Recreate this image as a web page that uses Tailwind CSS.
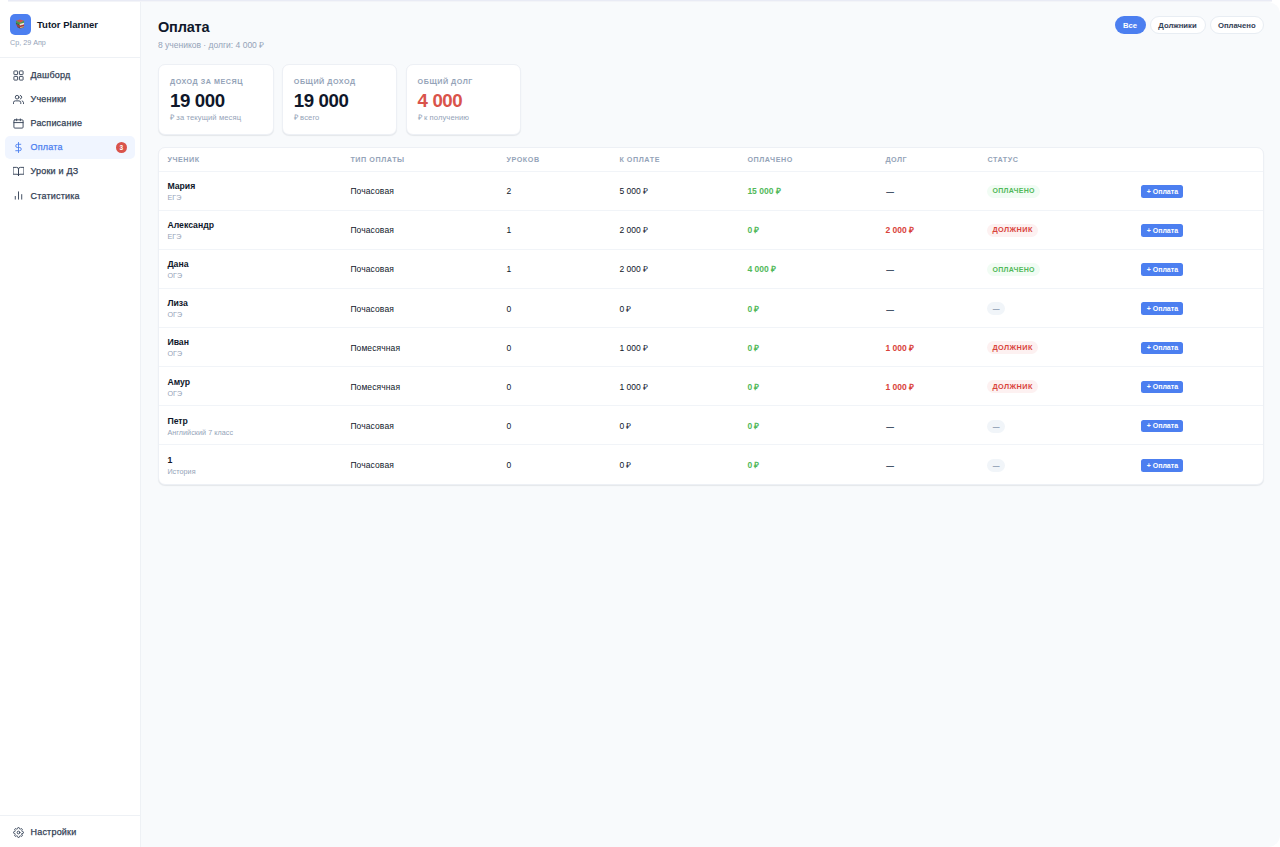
<!DOCTYPE html>
<html lang="ru">
<head>
    <meta charset="UTF-8">
    <meta name="viewport" content="width=device-width, initial-scale=1.0">
    <title>Tutor Planner</title>
    <script src="https://cdn.jsdelivr.net/npm/@tailwindcss/browser@4"></script>
</head>
<body class="h-screen overflow-hidden bg-white font-['Liberation_Sans',Arial,sans-serif] text-[#0f172a]">
    <div class="flex h-full flex-col">
        <div class="mx-2 h-[2px] shrink-0 border-b border-[#f3f4f8] bg-[#e9ebf5]"></div>
        <div class="flex min-h-0 flex-1">
            <!-- Sidebar -->
            <aside class="flex w-[141px] shrink-0 flex-col border-r border-[#eef1f5] bg-white">
                <div class="h-[56px] border-b border-[#eef1f5] px-[10px] pt-3">
                    <div class="flex items-center gap-[6.5px]">
                        <div class="flex size-[20.5px] items-center justify-center rounded-[5px] bg-[#4c7ff0]">
                            <svg class="size-[10px]" viewBox="0 0 22 22">
                                <path d="M2 4l9-3 9 3-8 5z" fill="#d2564a"/>
                                <path d="M2 4v4l9 4 9-3V4l-8 4z" fill="#4c9a4a"/>
                                <path d="M2 8l9 4v3l-9-4z" fill="#356b35"/>
                                <path d="M10 11l10-3v4l-9 3z" fill="#f1e4d0"/>
                                <path d="M3 11l8 4 9-3v3l-9 3-8-4z" fill="#b8342e"/>
                                <path d="M5 15l6 3 8-3v4l-8 2-6-3z" fill="#7a4434"/>
                                <path d="M11 18l8-2v2l-8 2z" fill="#e9c48f"/>
                            </svg>
                        </div>
                        <span class="pt-px text-[9.5px] leading-none font-bold">Tutor Planner</span>
                    </div>
                    <p class="mt-[4px] text-[7.2px] leading-[8px] text-[#94a3b8]">Ср, 29 Апр</p>
                </div>

                <nav class="flex flex-1 flex-col gap-[1.2px] px-[5px] pt-[5.5px] text-[9px] tracking-[0.2px] text-[#334155]">
                    <a class="flex h-[23px] items-center gap-[6.5px] px-[8px]">
                        <svg class="size-[11px]" viewBox="0 0 24 24" fill="none" stroke="currentColor" stroke-width="2" stroke-linejoin="round"><rect x="2" y="2" width="8" height="8" rx="1"/><rect x="14" y="2" width="8" height="8" rx="1"/><rect x="14" y="14" width="8" height="8" rx="1"/><rect x="2" y="14" width="8" height="8" rx="1"/></svg>
                        <span class="pt-px [-webkit-text-stroke:0.25px]">Дашборд</span>
                    </a>
                    <a class="flex h-[23px] items-center gap-[6.5px] px-[8px]">
                        <svg class="size-[11px]" viewBox="0 0 24 24" fill="none" stroke="currentColor" stroke-width="2" stroke-linecap="round" stroke-linejoin="round"><path d="M17 21v-2a4 4 0 0 0-4-4H5a4 4 0 0 0-4 4v2"/><circle cx="9" cy="7" r="4"/><path d="M23 21v-2a4 4 0 0 0-3-3.87"/><path d="M16 3.13a4 4 0 0 1 0 7.75"/></svg>
                        <span class="pt-px [-webkit-text-stroke:0.25px]">Ученики</span>
                    </a>
                    <a class="flex h-[23px] items-center gap-[6.5px] px-[8px]">
                        <svg class="size-[11px]" viewBox="0 0 24 24" fill="none" stroke="currentColor" stroke-width="2" stroke-linecap="round" stroke-linejoin="round"><rect x="2" y="4" width="20" height="18" rx="2"/><path d="M16 2v4M8 2v4M2 10h20"/></svg>
                        <span class="[-webkit-text-stroke:0.25px]">Расписание</span>
                    </a>
                    <a class="flex h-[23px] items-center gap-[6.5px] rounded-[5px] bg-[#f0f5ff] px-[8px] text-[#4c7ff0]">
                        <svg class="size-[11px]" viewBox="0 0 24 24" fill="none" stroke="currentColor" stroke-width="2" stroke-linecap="round" stroke-linejoin="round"><path d="M12 1v22"/><path d="M17 5H9.500a3.500 3.500 0 0 0 0 7h5a3.500 3.500 0 0 1 0 7H6"/></svg>
                        <span class="[-webkit-text-stroke:0.25px]">Оплата</span>
                        <span class="ml-auto flex size-[11.5px] items-center justify-center rounded-full bg-[#d9534b] text-[6.5px] font-bold tracking-normal text-white">3</span>
                    </a>
                    <a class="flex h-[23px] items-center gap-[6.5px] px-[8px]">
                        <svg class="size-[11px]" viewBox="0 0 24 24" fill="none" stroke="currentColor" stroke-width="2" stroke-linecap="round" stroke-linejoin="round"><path d="M1 3h7a4 4 0 0 1 4 4v14a3 3 0 0 0-3-3H1z"/><path d="M23 3h-7a4 4 0 0 0-4 4v14a3 3 0 0 1 3-3h8z"/></svg>
                        <span class="[-webkit-text-stroke:0.25px]">Уроки и ДЗ</span>
                    </a>
                    <a class="flex h-[23px] items-center gap-[6.5px] px-[8px]">
                        <svg class="size-[11px]" viewBox="0 0 24 24" fill="none" stroke="currentColor" stroke-width="2" stroke-linecap="round" stroke-linejoin="round"><path d="M19 20V10M12 20V4M5 20v-6"/></svg>
                        <span class="pt-px [-webkit-text-stroke:0.25px]">Статистика</span>
                    </a>
                </nav>

                <div class="h-[32px] border-t border-[#eef1f5] px-[5px] pt-[5px] text-[9px] tracking-[0.2px] text-[#334155]">
                    <a class="flex h-[23px] items-center gap-[6.5px] px-[8px]">
                        <svg class="size-[11px]" viewBox="0 0 24 24" fill="none" stroke="currentColor" stroke-width="2" stroke-linecap="round" stroke-linejoin="round"><circle cx="12" cy="12" r="3"/><path d="M19.400 15a1.650 1.650 0 0 0 .33 1.820l.06.06a2 2 0 1 1-2.830 2.830l-.06-.06a1.650 1.650 0 0 0-2.800 1.170V21a2 2 0 0 1-4 0v-.09a1.650 1.650 0 0 0-2.900-1.260l-.06.06a2 2 0 1 1-2.830-2.830l.06-.06A1.650 1.650 0 0 0 3.100 14H3a2 2 0 0 1 0-4h.09a1.650 1.650 0 0 0 1.260-2.900l-.06-.06a2 2 0 1 1 2.830-2.830l.06.06A1.650 1.650 0 0 0 10 3.090V3a2 2 0 0 1 4 0v.09a1.650 1.650 0 0 0 2.820 1.180l.06-.06a2 2 0 1 1 2.830 2.830l-.06.06A1.650 1.650 0 0 0 20.910 10H21a2 2 0 0 1 0 4h-.09a1.650 1.650 0 0 0-1.510 1z"/></svg>
                        <span class="[-webkit-text-stroke:0.25px]">Настройки</span>
                    </a>
                </div>
            </aside>

            <!-- Content -->
            <main class="min-w-0 flex-1 rounded-r-[12px] bg-[#f8fafc] pt-[14px] pr-4 pl-[17px]">
                <header class="flex h-[48px] items-start justify-between">
                    <div class="pt-[3px]">
                        <h1 class="text-[14.5px] leading-[17px] font-bold tracking-[-0.2px]">Оплата</h1>
                        <p class="mt-[4px] text-[8.5px] leading-[10px] text-[#94a3b8]">8 учеников · долги: 4 000 ₽</p>
                    </div>
                    <div class="flex gap-[4px] text-[7.7px] font-bold">
                        <button class="h-[18px] w-[31px] rounded-full bg-[#4c7ff0] pt-px text-white">Все</button>
                        <button class="h-[18px] w-[56px] rounded-full border border-[#e8edf3] bg-white pt-px text-[#334155]">Должники</button>
                        <button class="h-[18px] w-[54.5px] rounded-full border border-[#e8edf3] bg-white pt-px text-[#334155]">Оплачено</button>
                    </div>
                </header>

                <section class="flex gap-[8.3px]">
                    <div class="h-[71px] w-[115.5px] rounded-[7px] border border-[#edf0f5] bg-white pt-[12px] pl-[11px] shadow-[0_1px_1px_#0f172a14]">
                        <p class="text-[7.2px] leading-[9px] font-bold tracking-[0.52px] text-[#94a3b8]">ДОХОД ЗА МЕСЯЦ</p>
                        <p class="mt-[5px] text-[18.7px] leading-[20px] font-bold tracking-[-0.4px]">19 000</p>
                        <p class="mt-[2px] text-[7.6px] leading-[9px] tracking-[0.1px] text-[#94a3b8]">₽ за текущий месяц</p>
                    </div>
                    <div class="h-[71px] w-[115.5px] rounded-[7px] border border-[#edf0f5] bg-white pt-[12px] pl-[11px] shadow-[0_1px_1px_#0f172a14]">
                        <p class="text-[7.2px] leading-[9px] font-bold tracking-[0.52px] text-[#94a3b8]">ОБЩИЙ ДОХОД</p>
                        <p class="mt-[5px] text-[18.7px] leading-[20px] font-bold tracking-[-0.4px]">19 000</p>
                        <p class="mt-[2px] text-[7.6px] leading-[9px] tracking-[0.1px] text-[#94a3b8]">₽ всего</p>
                    </div>
                    <div class="h-[71px] w-[115.5px] rounded-[7px] border border-[#edf0f5] bg-white pt-[12px] pl-[11px] shadow-[0_1px_1px_#0f172a14]">
                        <p class="text-[7.2px] leading-[9px] font-bold tracking-[0.52px] text-[#94a3b8]">ОБЩИЙ ДОЛГ</p>
                        <p class="mt-[5px] text-[18.7px] leading-[20px] font-bold tracking-[-0.4px] text-[#d9534b]">4 000</p>
                        <p class="mt-[2px] text-[7.6px] leading-[9px] tracking-[0.1px] text-[#94a3b8]">₽ к получению</p>
                    </div>
                </section>

                <section class="mt-[12px] overflow-hidden rounded-[7px] border border-[#edf0f5] bg-white shadow-[0_1px_1px_#0f172a14]">
                    <table class="w-full table-fixed text-left text-[8.5px]">
                        <thead>
                            <tr class="h-[23px] text-[7.2px] tracking-[0.55px] text-[#94a3b8]">
                                <th class="w-[183px] pt-[2px] pl-[8.4px]">УЧЕНИК</th>
                                <th class="w-[156px] pt-[2px] pl-[8.4px]">ТИП ОПЛАТЫ</th>
                                <th class="w-[113px] pt-[2px] pl-[8.4px]">УРОКОВ</th>
                                <th class="w-[128px] pt-[2px] pl-[8.4px]">К ОПЛАТЕ</th>
                                <th class="w-[138px] pt-[2px] pl-[8.4px]">ОПЛАЧЕНО</th>
                                <th class="w-[102px] pt-[2px] pl-[8.4px]">ДОЛГ</th>
                                <th class="w-[154px] pt-[2px] pl-[8.4px]">СТАТУС</th>
                                <th></th>
                            </tr>
                        </thead>
                        <tbody id="students"></tbody>
                    </table>
                </section>
            </main>
        </div>
    </div>

    <script>
        const students = [
            ['Мария', 'ЕГЭ', 'Почасовая', 2, '5 000', '15 000', '', 'paid'],
            ['Александр', 'ЕГЭ', 'Почасовая', 1, '2 000', '0', '2 000', 'debt'],
            ['Дана', 'ОГЭ', 'Почасовая', 1, '2 000', '4 000', '', 'paid'],
            ['Лиза', 'ОГЭ', 'Почасовая', 0, '0', '0', '', 'none'],
            ['Иван', 'ОГЭ', 'Помесячная', 0, '1 000', '0', '1 000', 'debt'],
            ['Амур', 'ОГЭ', 'Помесячная', 0, '1 000', '0', '1 000', 'debt'],
            ['Петр', 'Английский 7 класс', 'Почасовая', 0, '0', '0', '', 'none'],
            ['1', 'История', 'Почасовая', 0, '0', '0', '', 'none'],
        ];

        const badges = {
            paid: '<span class="inline-flex h-[13px] items-center rounded-full bg-[#f1fcf4] px-[5px] pt-px text-[7px] font-bold tracking-[0.3px] text-[#52b95a]">ОПЛАЧЕНО</span>',
            debt: '<span class="inline-flex h-[13px] items-center rounded-full bg-[#fdf1f1] px-[5px] pt-px text-[7.3px] font-bold tracking-[0.45px] text-[#d9433b]">ДОЛЖНИК</span>',
            none: '<span class="inline-flex h-[13px] items-center rounded-full bg-[#f1f5f9] px-[5.5px] pt-px text-[6.3px] font-bold text-[#94a3b8] [-webkit-text-stroke:0.3px]">—</span>',
        };

        document.getElementById('students').innerHTML = students.map(([name, subject, type, lessons, due, paid, debt, status]) => `
            <tr class="h-[39.15px] border-t border-[#f1f4f8]">
                <td class="pt-[2.6px] pl-[8.4px]">
                    <div class="text-[8.7px] leading-[11px] font-bold">${name}</div>
                    <div class="mt-[1px] text-[7.2px] leading-[10px] tracking-[0.05px] text-[#94a3b8]">${subject}</div>
                </td>
                <td class="pt-[2px] pl-[8.4px] tracking-[0.1px]">${type}</td>
                <td class="pt-[2px] pl-[8.4px]">${lessons}</td>
                <td class="pt-[2px] pl-[8.4px]">${due} ₽</td>
                <td class="pt-[2px] pl-[8.4px] font-bold text-[#52b95a]">${paid} ₽</td>
                <td class="pt-[2px] pl-[8.4px]">${debt ? `<span class="font-bold text-[#d9433b]">${debt} ₽</span>` : '<span class="pl-px text-[7.2px] text-[#475569] [-webkit-text-stroke:0.4px]">—</span>'}</td>
                <td class="pt-[1.3px] pl-[8.4px]"><div class="flex">${badges[status]}</div></td>
                <td class="pt-[1.5px] pl-[8.4px]"><button class="flex h-[12.5px] w-[42px] items-center justify-center rounded-[2.5px] bg-[#4c7ff0] pt-px text-[7px] font-bold text-white">+ Оплата</button></td>
            </tr>`).join('');
    </script>
</body>
</html>
